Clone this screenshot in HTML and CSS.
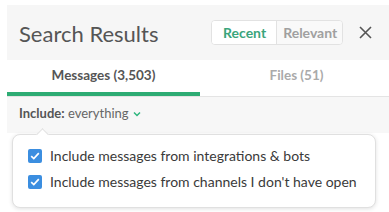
FILE: index.html
```html
<!DOCTYPE html>
<html>
<head>
<meta charset="utf-8">
<link rel="stylesheet" href="styles.css">
</head>
<body>
<div class="panel">
  <div class="header">
    <div class="title">Search Results</div>
    <div class="seg">
      <span class="seg-btn active">Recent</span>
      <span class="seg-btn">Relevant</span>
    </div>
    <svg class="close" width="13" height="13" viewBox="0 0 13 13"><path d="M1 1L12 12M12 1L1 12" stroke="#555" stroke-width="1.6" fill="none"/></svg>
  </div>
  <div class="tabs">
    <div class="tab active">Messages (3,503)</div>
    <div class="tab">Files (51)</div>
  </div>
  <div class="include"><b>Include:</b> everything <svg class="chev" width="8" height="6" viewBox="0 0 8 6"><path d="M1 1.5L4 4.5L7 1.5" stroke="#2eb67d" stroke-width="1.5" fill="none"/></svg></div>
  <div class="content">
    <div class="strip"></div>
    <div class="popover">
      <label class="opt"><span class="cb"><svg width="10" height="8" viewBox="0 0 10 8"><path d="M1.2 4.2L3.8 6.6L8.8 1.2" stroke="#fff" stroke-width="1.7" fill="none"/></svg></span>Include messages from integrations &amp; bots</label>
      <label class="opt"><span class="cb"><svg width="10" height="8" viewBox="0 0 10 8"><path d="M1.2 4.2L3.8 6.6L8.8 1.2" stroke="#fff" stroke-width="1.7" fill="none"/></svg></span>Include messages from channels I don't have open</label>
    </div>
  </div>
</div>
</body>
</html>
```
FILE: styles.css
```css
html, body { margin: 0; padding: 0; background: #fff; overflow: hidden; }
body { font-family: Lato, "Liberation Sans", sans-serif; color: #555; }
.panel { margin: 5px 0 0 7px; width: 388px; }
.header {
  height: 55px; background: #f6f6f6; display: flex; align-items: center;
  padding-left: 12px; box-sizing: border-box;
}
.title { font-size: 22px; color: #555; width: 192px; margin-top: 1px; }
.seg {
  display: flex; border: 1px solid #e2e2e2; border-radius: 4px; overflow: hidden;
  height: 23px; background: #fff;
}
.seg-btn {
  font-size: 14px; font-weight: bold; color: #a0a0a0; padding: 0 5px 0 6px;
  display: flex; align-items: center; background: #f9f9f9;
}
.seg-btn.active { color: #3aa57c; background: #fff; padding: 0 10px 0 11px; border-right: 1px solid #e2e2e2; }
.close { margin-left: 16px; }
.tabs { display: flex; height: 36px; border-bottom: 1px solid #e4e4e4; }
.tab {
  width: 193px; text-align: center; font-size: 13.5px; font-weight: bold; color: #aaa;
  padding-top: 7px; box-sizing: border-box;
}
.tab.active { color: #555; border-bottom: 4px solid #2eac74; }
.include {
  height: 36px; background: #f7f7f7; font-size: 13px; color: #666;
  padding: 8px 0 0 12px; box-sizing: border-box;
}
.include b { color: #555; }
.chev { margin-left: 1px; vertical-align: 1px; }
.content { position: relative; height: 80px; }
.strip { position: absolute; right: 0; top: 1px; width: 6px; height: 80px; background: #dcdcdc; }
.popover {
  position: absolute; left: 5px; top: 1px; width: 364px; height: 74px;
  background: #fff; border: 1px solid #e0e0e0; border-radius: 8px;
  box-shadow: 0 1px 4px rgba(0,0,0,0.12); box-sizing: border-box;
  padding: 13px 0 0 15px; display: flex; flex-direction: column; gap: 11px;
}
.popover::before {
  content: ""; position: absolute; left: 25px; top: -5px; width: 8px; height: 8px;
  background: #fff; border-left: 1px solid #e0e0e0; border-top: 1px solid #e0e0e0;
  transform: rotate(45deg);
}
.opt { display: flex; align-items: center; font-size: 14px; color: #3a3a3a; height: 15px; }
.cb {
  width: 14px; height: 14px; background: #3b8ee0; border-radius: 2px; margin-right: 8px;
  display: flex; align-items: center; justify-content: center;
}
```
